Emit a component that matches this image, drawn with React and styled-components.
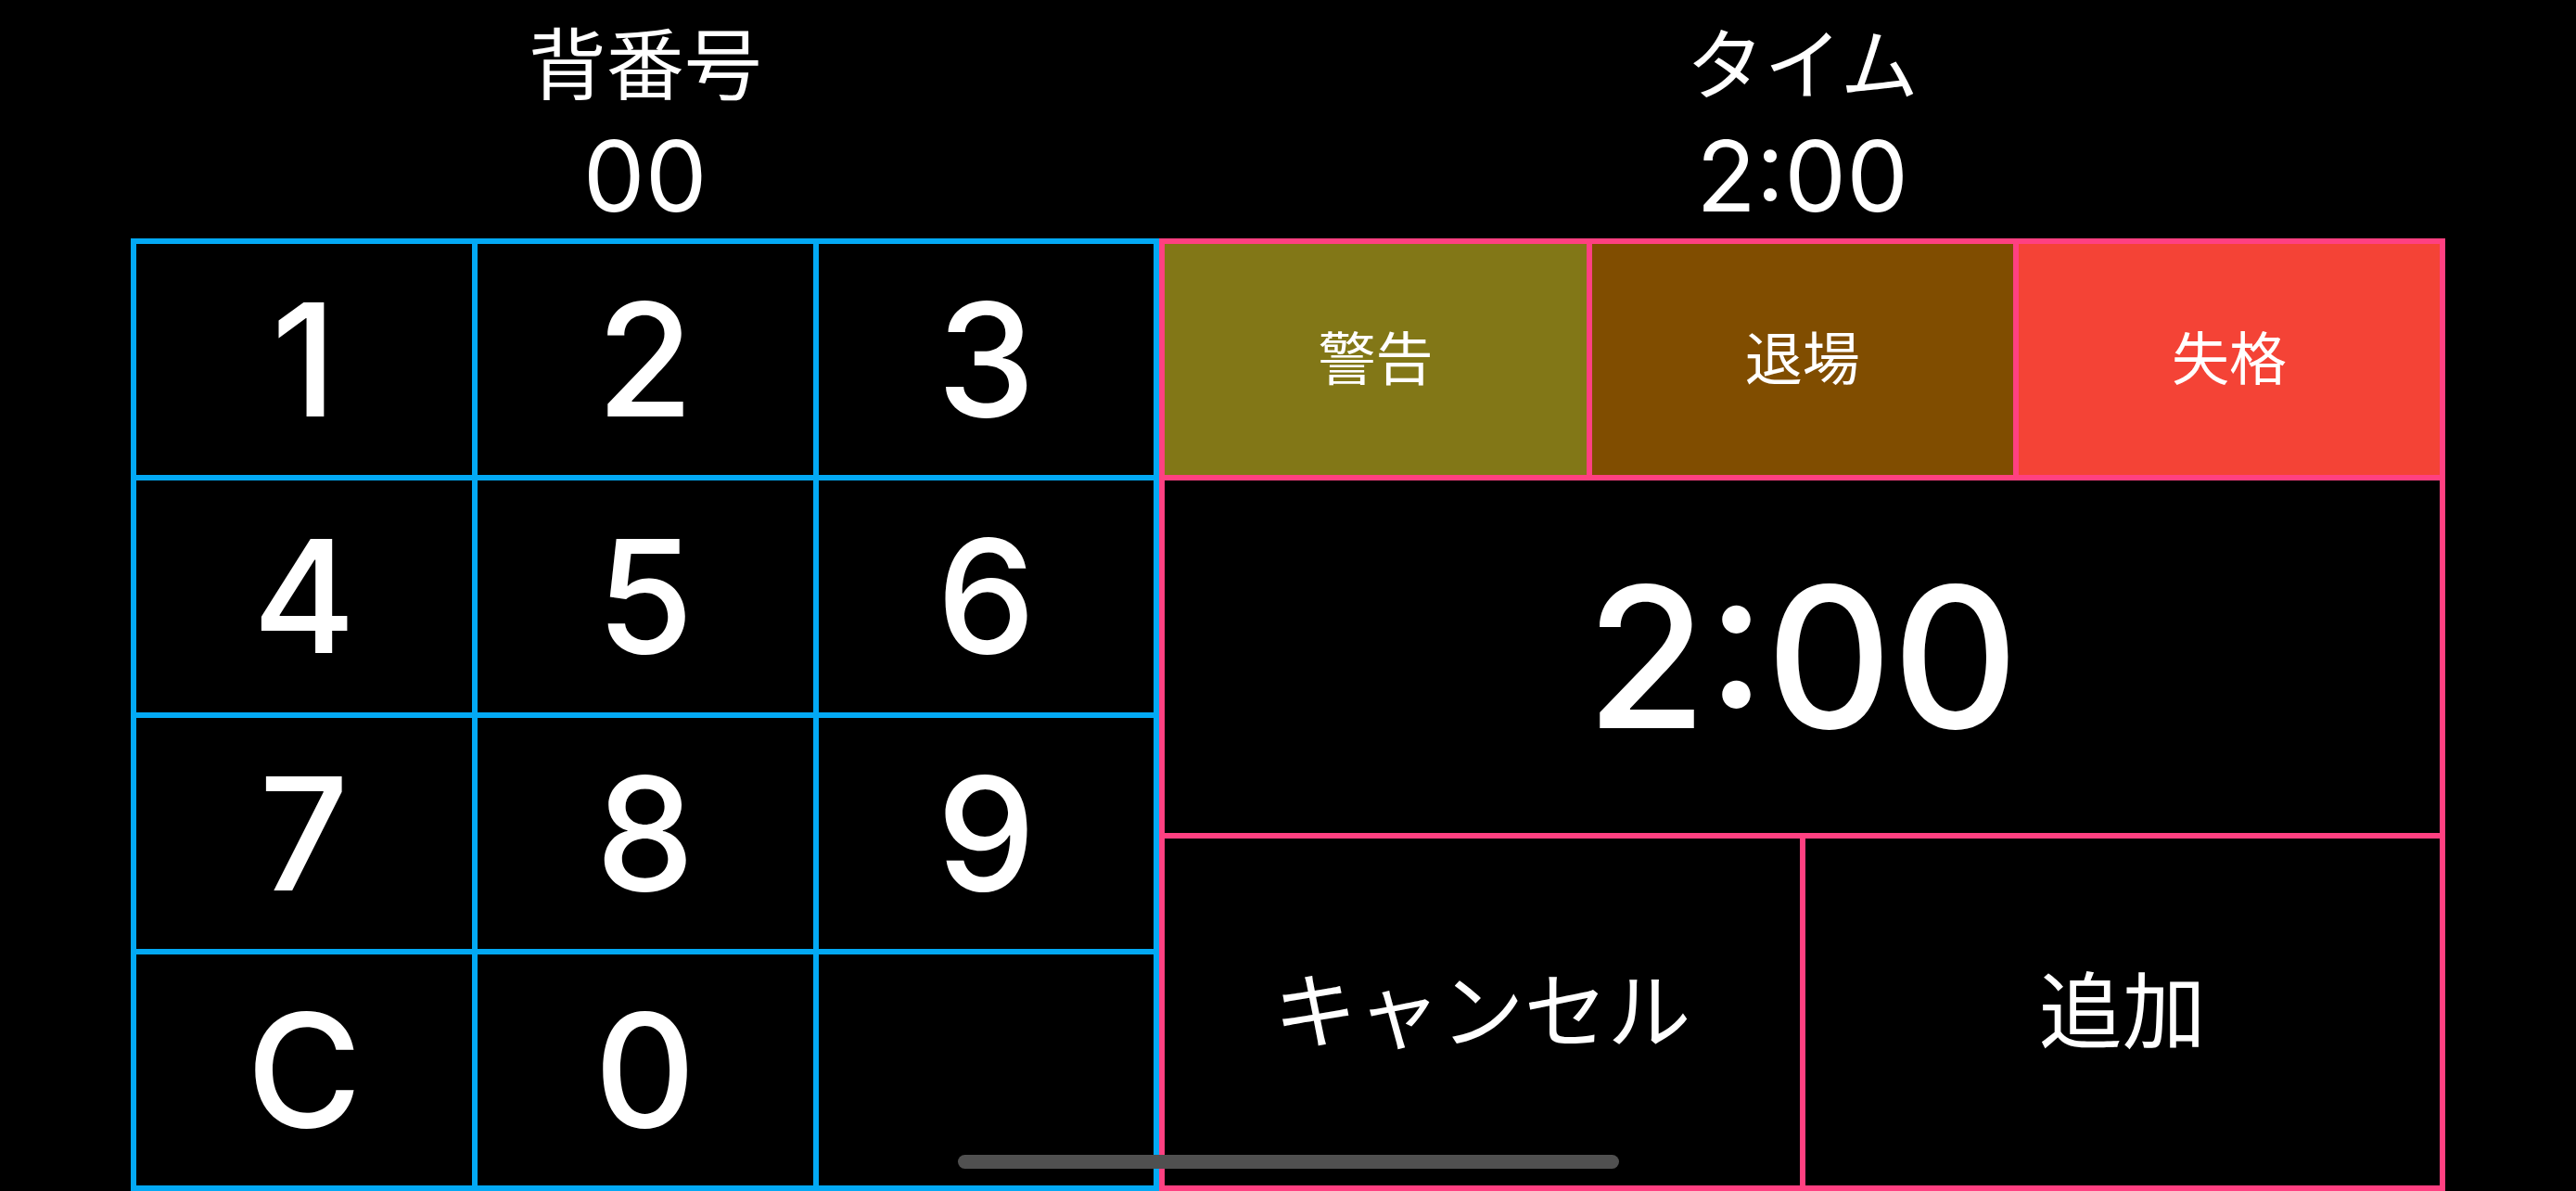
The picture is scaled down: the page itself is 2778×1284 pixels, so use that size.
import React from 'react';
import styled, { createGlobalStyle } from 'styled-components';

const GlobalStyle = createGlobalStyle`
	html, body {
		margin: 0;
		padding: 0;
		background: #000;
		overflow: hidden;
	}
	* {
		box-sizing: border-box;
	}
`;

const BLUE = '#03a9f4';
const PINK = '#ff4081';
const FONT = `"Inter", "Noto Sans CJK JP", sans-serif`;

const Screen = styled.div`
	position: relative;
	display: flex;
	width: 100vw;
	height: 100vh;
	padding: 0 141px;
	background: #000;
	color: #fff;
	font-family: ${FONT};
`;

const Column = styled.div`
	flex: ${props => props.grow};
	display: flex;
	flex-direction: column;
	min-width: 0;
`;

const Header = styled.div`
	height: 257px;
	flex-shrink: 0;
	display: flex;
	flex-direction: column;
	align-items: center;
	padding-top: 29px;
`;

const Label = styled.div`
	font-size: 84px;
	line-height: 1;
	font-weight: 400;
`;

const Value = styled.div`
	margin-top: 24px;
	font-size: 106px;
	line-height: 1;
	font-weight: 400;
`;

const Keypad = styled.div`
	flex: 1;
	display: grid;
	grid-template-columns: repeat(3, 1fr);
	grid-template-rows: repeat(4, 1fr);
	border: 3px solid ${BLUE};
`;

const Key = styled.button`
	display: flex;
	align-items: center;
	justify-content: center;
	margin: 0;
	padding: 0;
	background: transparent;
	border: 3px solid ${BLUE};
	color: #fff;
	font-family: ${FONT};
	font-size: 169px;
	font-weight: 500;
	line-height: 1;
`;

const Panel = styled.div`
	flex: 1;
	display: grid;
	grid-template-rows: 255fr 386fr 380fr;
	border: 3px solid ${PINK};
`;

const PenaltyRow = styled.div`
	display: grid;
	grid-template-columns: repeat(3, 1fr);
`;

const PenaltyButton = styled.button`
	display: flex;
	align-items: center;
	justify-content: center;
	margin: 0;
	padding: 0;
	background: ${props => props.color};
	border: 3px solid ${PINK};
	color: #fff;
	font-family: ${FONT};
	font-size: 62px;
	line-height: 1;
`;

const TimeDisplay = styled.div`
	display: flex;
	align-items: center;
	justify-content: center;
	border: 3px solid ${PINK};
	font-size: 211px;
	font-weight: 500;
	line-height: 1;
`;

const ActionRow = styled.div`
	display: grid;
	grid-template-columns: 1fr 1fr;
`;

const ActionButton = styled.button`
	display: flex;
	align-items: center;
	justify-content: center;
	margin: 0;
	padding: 0;
	background: transparent;
	border: 3px solid ${PINK};
	color: #fff;
	font-family: ${FONT};
	font-size: 90px;
	line-height: 1;
`;

const HomeIndicator = styled.div`
	position: absolute;
	left: 50%;
	bottom: 24px;
	width: 713px;
	height: 15px;
	margin-left: -356px;
	border-radius: 8px;
	background: #505050;
`;

const keys = ['1', '2', '3', '4', '5', '6', '7', '8', '9', 'C', '0', ''];

const penalties = [
	{ name: '警告', color: '#827717' },
	{ name: '退場', color: '#804d00' },
	{ name: '失格', color: '#f44336' },
];

const App = () => {
	return (
		<Screen>
			<GlobalStyle />
			<Column grow={4}>
				<Header>
					<Label>背番号</Label>
					<Value>00</Value>
				</Header>
				<Keypad>
					{keys.map((key, i) => (
						<Key key={i}>{key}</Key>
					))}
				</Keypad>
			</Column>
			<Column grow={5}>
				<Header>
					<Label>タイム</Label>
					<Value>2:00</Value>
				</Header>
				<Panel>
					<PenaltyRow>
						{penalties.map(p => (
							<PenaltyButton key={p.name} color={p.color}>{p.name}</PenaltyButton>
						))}
					</PenaltyRow>
					<TimeDisplay>2:00</TimeDisplay>
					<ActionRow>
						<ActionButton>キャンセル</ActionButton>
						<ActionButton>追加</ActionButton>
					</ActionRow>
				</Panel>
			</Column>
			<HomeIndicator />
		</Screen>
	);
};

export default App;
